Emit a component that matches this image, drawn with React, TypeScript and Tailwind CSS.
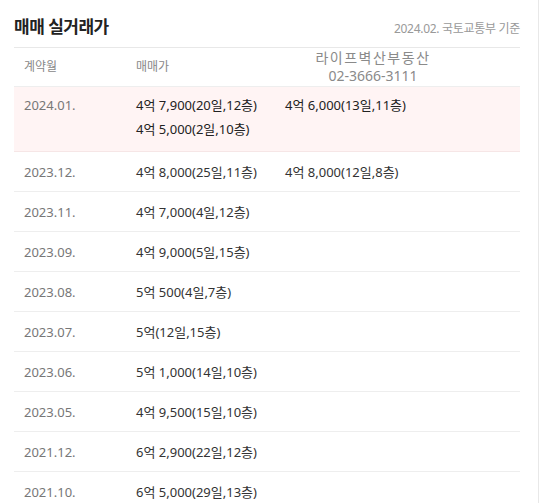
import React from 'react';

const ROWS: { month: string; prices: string[]; hot?: boolean }[] = [
  { month: '2024.01.', prices: ['4억 7,900(20일,12층)', '4억 6,000(13일,11층)', '4억 5,000(2일,10층)'], hot: true },
  { month: '2023.12.', prices: ['4억 8,000(25일,11층)', '4억 8,000(12일,8층)'] },
  { month: '2023.11.', prices: ['4억 7,000(4일,12층)'] },
  { month: '2023.09.', prices: ['4억 9,000(5일,15층)'] },
  { month: '2023.08.', prices: ['5억 500(4일,7층)'] },
  { month: '2023.07.', prices: ['5억(12일,15층)'] },
  { month: '2023.06.', prices: ['5억 1,000(14일,10층)'] },
  { month: '2023.05.', prices: ['4억 9,500(15일,10층)'] },
  { month: '2021.12.', prices: ['6억 2,900(22일,12층)'] },
  { month: '2021.10.', prices: ['6억 5,000(29일,13층)'] },
];

const App: React.FC = () => {
  return (
    <div
      className="w-[539px] h-[503px] overflow-hidden bg-white border-r border-[#e8e8e8]"
      style={{ fontFamily: '"Noto Sans", "Noto Sans CJK KR", sans-serif' }}
    >
      <div className="pl-[14px] pr-[18px]">
        <div className="flex items-end justify-between h-[47px] pb-[12px]">
          <h2 className="text-[17px] font-bold text-[#222] leading-none tracking-[-0.5px]">매매 실거래가</h2>
          <span className="text-[12px] text-[#999] leading-none tracking-[-0.3px]">2024.02. 국토교통부 기준</span>
        </div>

        <div className="relative border-t border-[#e8e8e8]">
          <div className="flex items-center h-[39px] border-b border-[#eeeeee] text-[12px] text-[#888]">
            <div className="w-[122px] pl-[10px]">계약월</div>
            <div>매매가</div>
          </div>
          <div className="absolute left-[279px] top-[1px] w-[160px] flex flex-col items-center text-[14px] text-[#8a8a8a]">
            <div className="h-[18px] leading-[18px] tracking-[1.5px]">라이프벽산부동산</div>
            <div className="h-[18px] leading-[18px]">02-3666-3111</div>
          </div>

          {ROWS.map((row) => (
            <div
              key={row.month}
              className={`flex border-b ${row.hot ? 'bg-[#fff4f4] border-[#f6e6e6] h-[65px] pt-[6px] items-start' : 'border-[#eeeeee] h-[40px] items-center'}`}
            >
              <div className="w-[122px] pl-[10px] text-[13px] leading-[24px] text-[#777]">{row.month}</div>
              <div className="flex flex-wrap content-start flex-1">
                {row.prices.map((p) => (
                  <div
                    key={p}
                    className={`w-[149px] text-[13px] leading-[24px] ${row.hot ? 'text-[#222]' : 'text-[#333]'}`}
                  >
                    {p}
                  </div>
                ))}
              </div>
            </div>
          ))}
        </div>
      </div>
    </div>
  );
};

export default App;
